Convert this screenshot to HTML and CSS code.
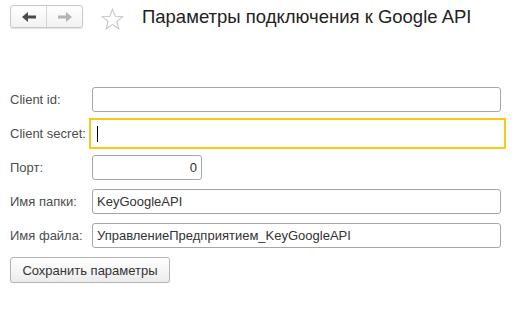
FILE: index.html
```html
<!DOCTYPE html>
<html lang="ru">
<head>
    <meta charset="UTF-8">
    <meta name="viewport" content="width=device-width, initial-scale=1.0">
    <title>Параметры подключения к Google API</title>
    <link rel="stylesheet" href="styles.css">
</head>
<body>
    <div class="window">
        <div class="header">
            <div class="nav-group">
                <button type="button" class="nav-btn">
                    <svg width="14" height="10" viewBox="0 0 14 10"><path d="M0 5 L6 0 L6 3.5 L14 3.5 L14 6.5 L6 6.5 L6 10 Z" fill="#4a4a4a"/></svg>
                </button>
                <button type="button" class="nav-btn">
                    <svg width="14" height="10" viewBox="0 0 14 10"><path d="M14 5 L8 0 L8 3.5 L0 3.5 L0 6.5 L8 6.5 L8 10 Z" fill="#b4b4b4"/></svg>
                </button>
            </div>
            <svg class="star" width="23" height="22" viewBox="0 0 22 21">
                <path d="M11 1 L13.6 7.8 L20.8 8.2 L15.2 12.8 L17.1 19.8 L11 15.9 L4.9 19.8 L6.8 12.8 L1.2 8.2 L8.4 7.8 Z" fill="none" stroke="#c4c4c4" stroke-width="1"/>
            </svg>
            <h1>Параметры подключения к Google API</h1>
        </div>

        <form class="form-grid">
            <label>Client id:</label>
            <div class="field"></div>

            <label>Client secret:</label>
            <div class="field focused"><span class="caret"></span></div>

            <label>Порт:</label>
            <div class="field short number">0</div>

            <label>Имя папки:</label>
            <div class="field">KeyGoogleAPI</div>

            <label>Имя файла:</label>
            <div class="field">УправлениеПредприятием_KeyGoogleAPI</div>
        </form>

        <button type="button" class="save-btn">Сохранить параметры</button>
    </div>
</body>
</html>
```

FILE: styles.css
```css
body {
    font-family: "Liberation Sans", Arial, sans-serif;
    margin: 0;
    padding: 0;
    background-color: #ffffff;
    color: #333;
}

.window {
    padding: 5px 10px 0 10px;
}

.header {
    display: flex;
    align-items: center;
    height: 23px;
}

.nav-group {
    display: flex;
    width: 73px;
    height: 23px;
    box-sizing: border-box;
    border: 1px solid #c8c8c8;
    border-radius: 3px;
    background: linear-gradient(#ffffff, #f2f2f2);
    box-shadow: 0 1px 1px rgba(0, 0, 0, 0.12);
}

.nav-btn {
    flex: 1;
    display: flex;
    align-items: center;
    justify-content: center;
    border: none;
    background: transparent;
    padding: 0;
}

.nav-btn + .nav-btn {
    border-left: 1px solid #d6d6d6;
}

.star {
    margin-left: 18px;
    margin-top: 4px;
}

h1 {
    margin: 0 0 0 18px;
    font-size: 18.5px;
    font-weight: normal;
    color: #222;
}

.form-grid {
    display: grid;
    grid-template-columns: 82px 409px;
    grid-auto-rows: 25px;
    row-gap: 9px;
    margin-top: 59px;
    align-items: center;
}

label {
    font-size: 13px;
    color: #4d4d4d;
}

.field {
    height: 25px;
    box-sizing: border-box;
    border: 1px solid #a6a6a6;
    border-radius: 3px;
    padding: 0 4px;
    font-size: 13px;
    line-height: 23px;
    color: #333;
    white-space: nowrap;
    overflow: hidden;
}

.field.focused {
    border-color: #ffffff;
    border-radius: 0;
    outline: 2px solid #fbc915;
    outline-offset: 1px;
    width: 411px;
}

.caret {
    display: inline-block;
    width: 1px;
    height: 16px;
    margin-top: 4px;
    vertical-align: top;
    background-color: #000;
}

.field.short {
    width: 110px;
}

.field.number {
    text-align: right;
}

.save-btn {
    display: block;
    margin-top: 9px;
    width: 160px;
    height: 26px;
    border: 1px solid #b4b4b4;
    border-radius: 3px;
    background: linear-gradient(#ffffff, #ececec);
    box-shadow: 0 1px 1px rgba(0, 0, 0, 0.15);
    font-family: "Liberation Sans", Arial, sans-serif;
    font-size: 13px;
    color: #333;
    padding: 0;
    cursor: pointer;
}
```
